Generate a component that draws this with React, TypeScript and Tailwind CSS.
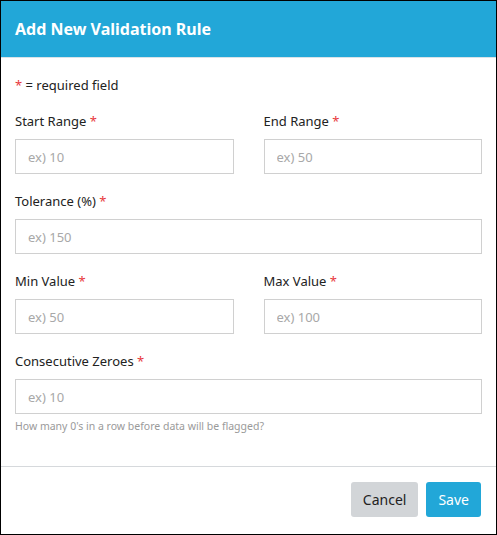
const fieldInput =
  'w-full h-[35px] border border-[#d0d0d0] px-[12px] text-[13px] text-[#333] placeholder:text-[#a8a8a8] outline-none bg-white';

function Label({ text }: { text: string }) {
  return (
    <label className="block text-[13px] text-[#222] leading-[18px] mb-[9px]">
      {text} <span className="text-[#e8383d]">*</span>
    </label>
  );
}

function Field({ label, placeholder }: { label: string; placeholder: string }) {
  return (
    <div>
      <Label text={label} />
      <input className={fieldInput} placeholder={placeholder} />
    </div>
  );
}

export default function App() {
  return (
    <div
      className="w-[497px] h-[535px] border border-black bg-white flex flex-col"
      style={{ fontFamily: '"Noto Sans", "Open Sans", sans-serif' }}
    >
      {/* Header */}
      <div className="h-[57px] bg-[#22a7d8] border-b border-[#d9e3e8] flex items-center px-[14px] shrink-0">
        <h2 className="text-white text-[16px] font-bold">Add New Validation Rule</h2>
      </div>

      {/* Body */}
      <div className="px-[14px] pt-[18px] flex-1">
        <p className="text-[13px] text-[#222] leading-[18px]">
          <span className="text-[#e8383d]">*</span> = required field
        </p>

        <div className="mt-[18px] grid grid-cols-2 gap-x-[30px] gap-y-[18px]">
          <Field label="Start Range" placeholder="ex) 10" />
          <Field label="End Range" placeholder="ex) 50" />
          <div className="col-span-2">
            <Field label="Tolerance (%)" placeholder="ex) 150" />
          </div>
          <Field label="Min Value" placeholder="ex) 50" />
          <Field label="Max Value" placeholder="ex) 100" />
          <div className="col-span-2">
            <Field label="Consecutive Zeroes" placeholder="ex) 10" />
            <p className="mt-[5px] text-[10.5px] leading-[14px] text-[#9a9a9a]">
              How many 0's in a row before data will be flagged?
            </p>
          </div>
        </div>
      </div>

      {/* Footer */}
      <div className="border-t border-[#d6d9dc] h-[68px] shrink-0 flex items-center justify-end gap-[8px] pl-[14px] pr-[15px] pb-[2px]">
        <button className="h-[35px] px-[12px] rounded-[3px] bg-[#d2d5d8] text-[#222] text-[14px]">Cancel</button>
        <button className="h-[35px] px-[12px] rounded-[3px] bg-[#22a7d8] text-white text-[14px]">Save</button>
      </div>
    </div>
  );
}
